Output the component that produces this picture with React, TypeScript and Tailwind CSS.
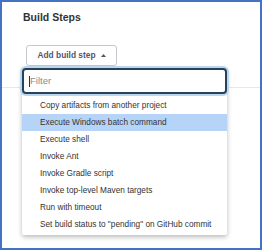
import React from 'react';

const steps = [
  'Copy artifacts from another project',
  'Execute Windows batch command',
  'Execute shell',
  'Invoke Ant',
  'Invoke Gradle script',
  'Invoke top-level Maven targets',
  'Run with timeout',
  'Set build status to "pending" on GitHub commit',
];

const App: React.FC = () => {
  const active = 1;

  return (
    <div className="w-[262px] h-[250px] border-2 border-[#4472c4] bg-white overflow-hidden font-['Liberation_Sans',Arial,sans-serif]">
      <h2 className="pl-[21px] pt-[8px] text-[10.5px] leading-[14px] font-bold text-[#333]">Build Steps</h2>

      <div className="relative ml-[24px] mt-[21px] w-[91px]">
        <button className="flex items-center justify-center gap-[5px] w-[91px] h-[21px] border border-[#c6c6cc] rounded-[3px] bg-white text-[8.4px] font-bold text-[#55556a]">
          Add build step
          <svg width="5" height="3" viewBox="0 0 5 3">
            <path d="M0 3 L2.5 0 L5 3 Z" fill="#55556a" />
          </svg>
        </button>

        {/* dropdown */}
        <div className="absolute left-[-4px] top-[23px] z-10 w-[205px] bg-white shadow-[0_2px_5px_rgba(0,0,0,0.28)] rounded-b-[2px]">
          <div className="flex items-center h-[26px] px-[5px] border-2 border-[#26415c] rounded-[4px] ring-2 ring-[#bcd6ee] bg-white">
            <span className="w-px h-[11px] bg-[#333]" />
            <span className="text-[9.5px] text-[#8a8a8a]">Filter</span>
          </div>
          <ul className="pt-[3px] pb-[2px]">
            {steps.map((s, i) => (
              <li
                key={s}
                className={`h-[17px] leading-[17px] pl-[18px] text-[8.25px] text-[#333] whitespace-nowrap ${i === active ? 'bg-[#b6d4f8]' : ''}`}
              >
                {s}
              </li>
            ))}
          </ul>
        </div>
      </div>

      <div className="mt-[21px] h-px bg-[#e8e8e8]" />
    </div>
  );
};

export default App;
